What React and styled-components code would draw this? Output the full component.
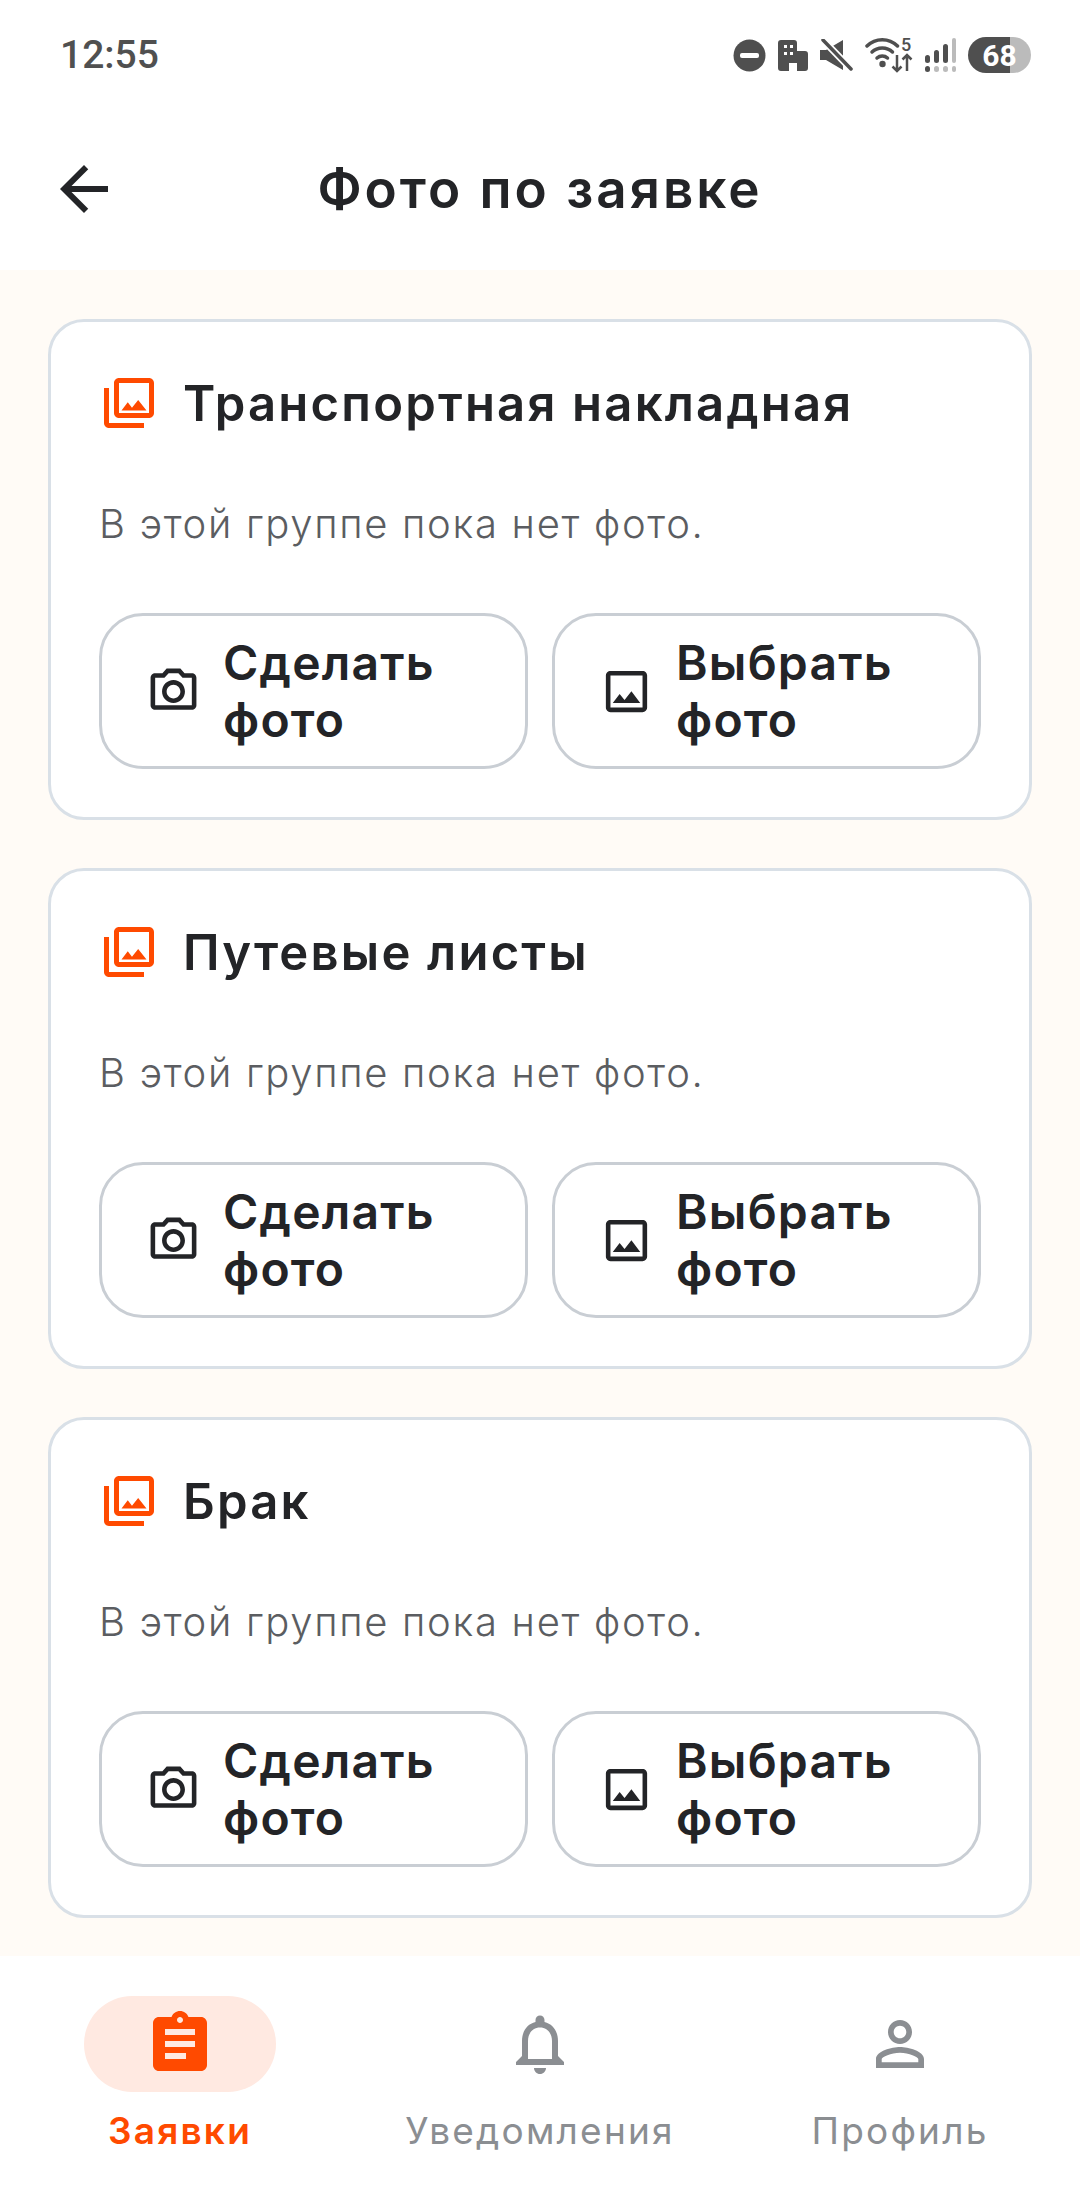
import React from "react";
import styled, { createGlobalStyle } from "styled-components";

const GlobalStyle = createGlobalStyle`
  html, body {
    margin: 0;
    padding: 0;
    background: #fff;
  }
  * {
    box-sizing: border-box;
  }
`;

const ORANGE = "#FF4A00";
const INK = "#232427";
const MUTED = "#8B8E92";

const paths = {
  back: "M20 11H7.83l5.59-5.59L12 4l-8 8 8 8 1.41-1.41L7.83 13H20v-2z",
  library:
    "M20 4v12H8V4h12m0-2H8c-1.1 0-2 .9-2 2v12c0 1.1.9 2 2 2h12c1.1 0 2-.9 2-2V4c0-1.1-.9-2-2-2zm-8.5 9.67l1.69 2.26 2.48-3.1L19 15H9zM2 6v14c0 1.1.9 2 2 2h14v-2H4V6H2z",
  camera:
    "M14.12 4l1.83 2H20v12H4V6h4.05l1.83-2h4.24M15 2H9L7.17 4H4c-1.1 0-2 .9-2 2v12c0 1.1.9 2 2 2h16c1.1 0 2-.9 2-2V6c0-1.1-.9-2-2-2h-3.17L15 2zm-3 7c1.65 0 3 1.35 3 3s-1.35 3-3 3-3-1.35-3-3 1.35-3 3-3m0-2c-2.76 0-5 2.24-5 5s2.24 5 5 5 5-2.24 5-5-2.24-5-5-5z",
  image:
    "M19 5v14H5V5h14m0-2H5c-1.1 0-2 .9-2 2v14c0 1.1.9 2 2 2h14c1.1 0 2-.9 2-2V5c0-1.1-.9-2-2-2zm-4.86 8.86l-3 3.87L9 13.14 6 17h12l-3.86-5.14z",
  assignment:
    "M19 3h-4.18C14.4 1.84 13.3 1 12 1c-1.3 0-2.4.84-2.82 2H5c-1.1 0-2 .9-2 2v14c0 1.1.9 2 2 2h14c1.1 0 2-.9 2-2V5c0-1.1-.9-2-2-2zm-7 0c.55 0 1 .45 1 1s-.45 1-1 1-1-.45-1-1 .45-1 1-1zm2 14H7v-2h7v2zm3-4H7v-2h10v2zm0-4H7V7h10v2z",
  bell:
    "M12 22c1.1 0 2-.9 2-2h-4c0 1.1.89 2 2 2zm6-6v-5c0-3.07-1.64-5.64-4.5-6.32V4c0-.83-.67-1.5-1.5-1.5s-1.5.67-1.5 1.5v.68C7.63 5.36 6 7.92 6 11v5l-2 2v1h16v-1l-2-2zm-2 1H8v-6c0-2.48 1.51-4.5 4-4.5s4 2.02 4 4.5v6z",
  person:
    "M12 5.9c1.16 0 2.1.94 2.1 2.1s-.94 2.1-2.1 2.1S9.9 9.16 9.9 8s.94-2.1 2.1-2.1m0 9c2.97 0 6.1 1.46 6.1 2.1v1.1H5.9V17c0-.64 3.13-2.1 6.1-2.1M12 4C9.79 4 8 5.79 8 8s1.79 4 4 4 4-1.79 4-4-1.79-4-4-4zm0 9c-2.67 0-8 1.34-8 4v3h16v-3c0-2.66-5.33-4-8-4z",
};

function Icon({ name, size, color }) {
  return (
    <IconSvg viewBox="0 0 24 24" width={size} height={size} fill={color}>
      <path d={paths[name]} />
    </IconSvg>
  );
}

function StatusIcons() {
  const c = "#4F4F4F";
  return (
    <StatusRight>
      <svg width="33" height="33" viewBox="0 0 33 33">
        <circle cx="16.5" cy="16.5" r="16" fill={c} />
        <rect x="7" y="14" width="19" height="5" rx="2" fill="#fff" />
      </svg>
      <svg width="30" height="32" viewBox="0 0 30 32">
        <path
          fill={c}
          d="M3 1h13a3 3 0 0 1 3 3v8h8a3 3 0 0 1 3 3v14a3 3 0 0 1-3 3H19v-8h-8v8H3a3 3 0 0 1-3-3V4a3 3 0 0 1 3-3z"
        />
        <rect x="6" y="6" width="3" height="3" fill="#fff" />
        <rect x="12" y="6" width="3" height="3" fill="#fff" />
        <rect x="6" y="13" width="3" height="3" fill="#fff" />
        <rect x="12" y="13" width="3" height="3" fill="#fff" />
      </svg>
      <svg width="33" height="32" viewBox="0 0 33 32">
        <path fill={c} d="M0 11h6L23 1v30L6 21H0z" />
        <path d="M3 1l28 29" stroke="#fff" strokeWidth="7" />
        <path d="M3 1l28 29" stroke={c} strokeWidth="3.500" strokeLinecap="round" />
      </svg>
      <svg width="48" height="44" viewBox="0 -4 48 44">
        <g fill="none" stroke={c} strokeWidth="3.500" strokeLinecap="round">
          <path d="M2 9c8.500-8.500 22-8.500 30.500 0" />
          <path d="M7 15c5.500-5.500 15-5.500 20.500 0" />
          <path d="M12 21c3-2.600 7.500-2.600 10.500 0" />
        </g>
        <circle cx="17.500" cy="27" r="3.200" fill={c} />
        <g fill="none" stroke={c} strokeWidth="2.500">
          <path d="M32 18v16M27.500 29.500l4.500 4.500 4.500-4.500" />
          <path d="M42 34V18M37.500 22.500l4.500-4.500 4.500 4.500" />
        </g>
        <StatusDigit x="36" y="14">
          5
        </StatusDigit>
      </svg>
      <svg width="31" height="34" viewBox="0 0 31 34">
        <g fill={c}>
          <rect x="0" y="17" width="5" height="8" rx="2.500" />
          <rect x="9" y="12" width="5" height="13" rx="2.500" />
          <rect x="18" y="6" width="5" height="19" rx="2.500" />
          <rect x="0" y="28" width="5" height="6" rx="2.500" />
        </g>
        <g fill="#BBBBBB">
          <rect x="27" y="0" width="4" height="25" rx="2" />
          <rect x="9" y="28" width="5" height="6" rx="2.500" />
          <rect x="18" y="28" width="5" height="6" rx="2.500" />
          <rect x="27" y="28" width="4" height="6" rx="2" />
        </g>
      </svg>
      <Battery>68</Battery>
    </StatusRight>
  );
}

function PhotoGroup({ title }) {
  return (
    <Card>
      <CardTitleRow>
        <Icon name="library" size={60} color={ORANGE} />
        <CardTitle>{title}</CardTitle>
      </CardTitleRow>
      <EmptyText>В этой группе пока нет фото.</EmptyText>
      <Actions>
        <ActionButton>
          <Icon name="camera" size={55} color={INK} />
          <ActionLabel>Сделать фото</ActionLabel>
        </ActionButton>
        <ActionButton>
          <Icon name="image" size={55} color={INK} />
          <ActionLabel>Выбрать фото</ActionLabel>
        </ActionButton>
      </Actions>
    </Card>
  );
}

export default function App() {
  return (
    <>
      <GlobalStyle />
      <Screen>
        <StatusBar>
          <Clock>12:55</Clock>
          <StatusIcons />
        </StatusBar>
        <AppBar>
          <BackButton>
            <Icon name="back" size={72} color={INK} />
          </BackButton>
          <PageTitle>Фото по заявке</PageTitle>
        </AppBar>
        <Content>
          <PhotoGroup title="Транспортная накладная" />
          <PhotoGroup title="Путевые листы" />
          <PhotoGroup title="Брак" />
        </Content>
        <BottomNav>
          <NavItem>
            <NavPill $active>
              <Icon name="assignment" size={72} color={ORANGE} />
            </NavPill>
            <NavLabel $active>Заявки</NavLabel>
          </NavItem>
          <NavItem>
            <NavPill>
              <Icon name="bell" size={72} color={MUTED} />
            </NavPill>
            <NavLabel>Уведомления</NavLabel>
          </NavItem>
          <NavItem>
            <NavPill>
              <Icon name="person" size={72} color={MUTED} />
            </NavPill>
            <NavLabel>Профиль</NavLabel>
          </NavItem>
        </BottomNav>
      </Screen>
    </>
  );
}

const Screen = styled.div`
  width: 1080px;
  height: 2194px;
  display: flex;
  flex-direction: column;
  overflow: hidden;
  background: #fff;
  font-family: Inter, "Noto Sans", sans-serif;
  color: ${INK};
`;

const IconSvg = styled.svg`
  display: block;
  flex: none;
`;

const StatusBar = styled.div`
  height: 108px;
  flex: none;
  display: flex;
  align-items: center;
  justify-content: space-between;
  padding: 2px 49px 0 60px;
`;

const Clock = styled.div`
  font-family: Roboto, "Liberation Sans", sans-serif;
  font-size: 39px;
  font-weight: 500;
  color: #505050;
`;

const StatusRight = styled.div`
  display: flex;
  align-items: center;
  gap: 12px;
`;

const StatusDigit = styled.text`
  font-family: Roboto, sans-serif;
  font-size: 18px;
  font-weight: 500;
  fill: #4f4f4f;
`;

const Battery = styled.div`
  width: 63px;
  height: 36px;
  border-radius: 18px;
  display: flex;
  align-items: center;
  justify-content: center;
  background: linear-gradient(90deg, #4f4f4f 67%, #bbbbbb 67%);
  color: #fff;
  font-family: Roboto, sans-serif;
  font-size: 30px;
  font-weight: 700;
`;

const AppBar = styled.div`
  height: 162px;
  flex: none;
  position: relative;
  display: flex;
  align-items: center;
  justify-content: center;
`;

const BackButton = styled.div`
  position: absolute;
  left: 48px;
  top: 45px;
`;

const PageTitle = styled.h1`
  margin: 0;
  font-size: 53px;
  font-weight: 600;
  letter-spacing: 3px;
`;

const Content = styled.main`
  flex: 1;
  display: flex;
  flex-direction: column;
  gap: 48px;
  padding: 49px 48px 0;
  background: #fffbf6;
`;

const Card = styled.section`
  height: 501px;
  border: 3px solid #d9e0e7;
  border-radius: 36px;
  background: #fff;
  padding: 48px;
  display: flex;
  flex-direction: column;
`;

const CardTitleRow = styled.div`
  height: 66px;
  display: flex;
  align-items: center;
  gap: 24px;
`;

const CardTitle = styled.h2`
  margin: 0;
  font-size: 49px;
  font-weight: 600;
  letter-spacing: 2.2px;
`;

const EmptyText = styled.p`
  margin: 65px 0 0;
  font-size: 40px;
  line-height: 46px;
  font-weight: 300;
  letter-spacing: 1.7px;
  color: #5b5d61;
`;

const Actions = styled.div`
  margin-top: auto;
  display: grid;
  grid-template-columns: 1fr 1fr;
  gap: 24px;
`;

const ActionButton = styled.div`
  height: 156px;
  border: 3px solid #c9ced4;
  border-radius: 44px;
  padding: 0 44px;
  display: flex;
  align-items: center;
  gap: 22px;
`;

const ActionLabel = styled.span`
  font-size: 48px;
  line-height: 57px;
  font-weight: 600;
  letter-spacing: 1.2px;
`;

const BottomNav = styled.nav`
  height: 238px;
  flex: none;
  display: grid;
  grid-template-columns: repeat(3, 1fr);
  background: #fff;
`;

const NavItem = styled.div`
  display: flex;
  flex-direction: column;
  align-items: center;
  padding-top: 40px;
`;

const NavPill = styled.div`
  width: 192px;
  height: 96px;
  border-radius: 48px;
  display: flex;
  align-items: center;
  justify-content: center;
  background: ${({ $active }) => ($active ? "#FFE9E1" : "transparent")};
`;

const NavLabel = styled.span`
  margin-top: 17px;
  font-size: 37px;
  line-height: 44px;
  font-weight: ${({ $active }) => ($active ? 600 : 400)};
  letter-spacing: 2.2px;
  color: ${({ $active }) => ($active ? ORANGE : MUTED)};
`;
